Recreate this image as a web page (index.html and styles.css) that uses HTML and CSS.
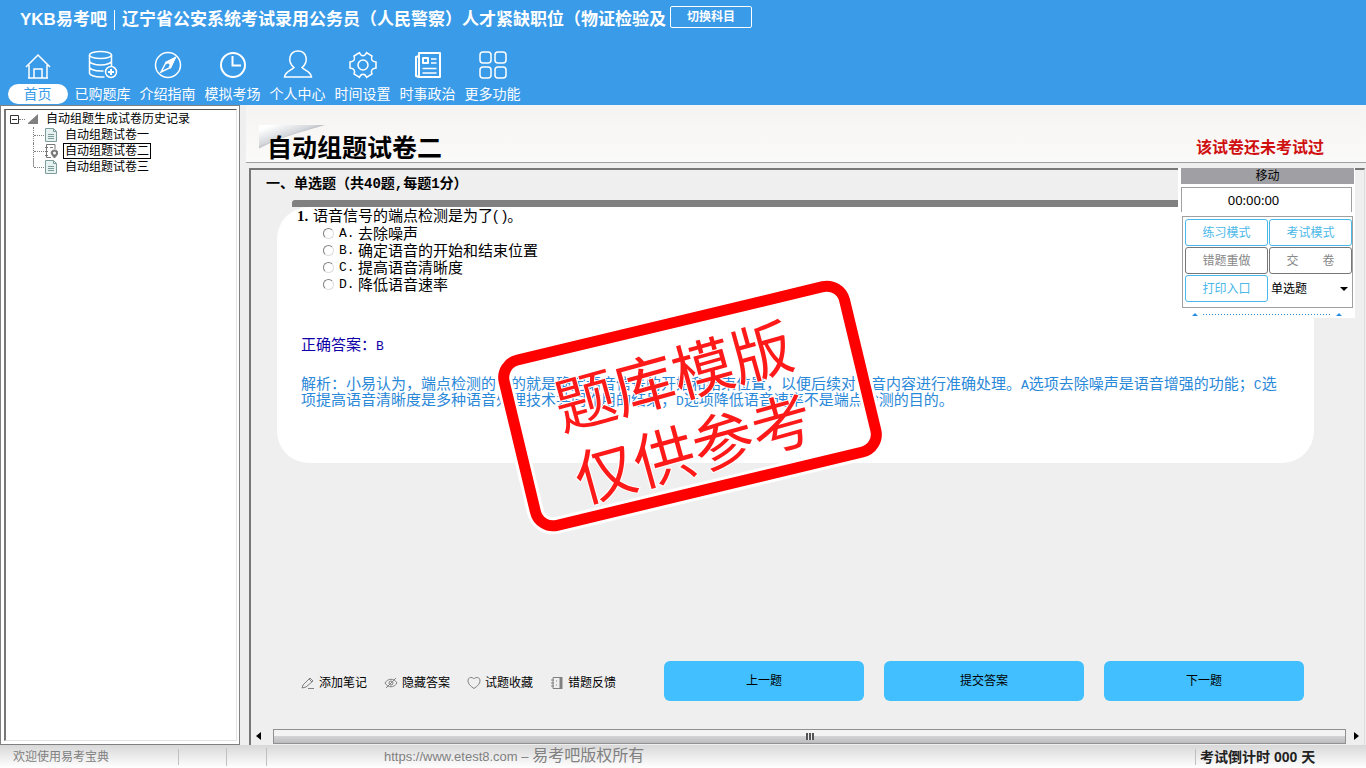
FILE: index.html
```html
<!DOCTYPE html>
<html lang="zh-CN">
<head>
  <meta charset="UTF-8">
  <meta name="viewport" content="width=device-width, initial-scale=1.0">
  <title>易考吧 - 自动组题试卷二</title>
  <link rel="stylesheet" href="styles.css">
</head>
<body>
  <!-- 顶部 -->
  <header class="header">
    <div class="title-bar">
      <span class="logo">YKB易考吧</span>
      <h1 class="subject">辽宁省公安系统考试录用公务员（人民警察）人才紧缺职位（物证检验及</h1>
      <button type="button" class="switch-btn">切换科目</button>
    </div>
    <nav class="nav">
      <a href="#" class="active">
        <svg viewBox="0 0 30 30"><path d="M3 17 15 5 27 17M6 15v13h5v-9h8v9h5V15M5 28h20"/></svg>
        <span>首页</span>
      </a>
      <a href="#">
        <svg viewBox="0 0 30 30"><ellipse cx="12.500" cy="5" rx="11" ry="3.500"/><path d="M1.500 5v18c0 2 5 4 11 4h4M23.500 5v11M1.500 11c0 2 5 4 11 4s11-2 11-4M1.500 17c0 2 5 4 11 4h3"/><circle cx="23" cy="22" r="5.500"/><path d="M23 19v6M20 22h6" stroke-width="2"/></svg>
        <span>已购题库</span>
      </a>
      <a href="#">
        <svg viewBox="0 0 30 30"><circle cx="15" cy="15" r="12.500"/><path d="m22 8-4.500 9.500L8 22l5-9.500z"/><path d="m22 8-9 4.500 4.500 5z" fill="#fff"/><circle cx="15" cy="15" r="1.500" fill="#3a9be8" stroke="none"/></svg>
        <span>介绍指南</span>
      </a>
      <a href="#">
        <svg viewBox="0 0 30 30"><circle cx="15" cy="15" r="12" stroke-width="2"/><path d="M14.500 6v9.500H23" stroke-width="2"/></svg>
        <span>模拟考场</span>
      </a>
      <a href="#">
        <svg viewBox="0 0 30 30"><path d="M11 17.500C4 12 6 1 15 1s11 11 4 16.500c3 3 9 4 9.500 9.500h-27C2 21.500 8 20.500 11 17.500z"/></svg>
        <span>个人中心</span>
      </a>
      <a href="#">
        <svg viewBox="0 0 30 30"><circle cx="15" cy="15" r="5"/><path d="m10 3.500 1.500-.8c1 2.500 2 3 3.500 3s2.500-.5 3.500-3l5.500 3.300c-1.500 3.500 0 5.500 4 6v6c-4 .5-5.500 2.500-4 6l-5.500 3.300c-1-2.500-2-3-3.500-3s-2.500.5-3.500 3L6 24c1.500-3.500 0-5.500-4-6v-6c4-.5 5.500-2.500 4-6z"/></svg>
        <span>时间设置</span>
      </a>
      <a href="#">
        <svg viewBox="0 0 30 30"><path d="M6 3h21v24H6zM6 6 3 7v19l3 1M10 8h5v5h-5z" stroke-width="2" stroke-linejoin="round"/><path d="M18 9h5.500M18 13h5.500M9.500 18.500h14M9.500 23h14"/></svg>
        <span>时事政治</span>
      </a>
      <a href="#">
        <svg viewBox="0 0 30 30"><rect x="2" y="2" width="11" height="11" rx="3"/><rect x="17" y="2" width="11" height="11" rx="3"/><rect x="2" y="17" width="11" height="11" rx="3"/><rect x="17" y="17" width="11" height="11" rx="3"/></svg>
        <span>更多功能</span>
      </a>
    </nav>
  </header>

  <main class="main">
    <!-- 左侧试卷列表 -->
    <aside class="sidebar">
      <div class="tree">
        <div class="tree-root">
          <svg class="toggle" viewBox="0 0 9 9"><path d="M.5.5h8v8h-8zM2 4.500h5"/></svg>
          <span class="dots"></span>
          <svg class="root-icon" viewBox="0 0 11 11"><path d="M10 0v10H0V9z"/></svg>
          <span>自动组题生成试卷历史记录</span>
        </div>
        <ul class="tree-list">
          <li>
            <svg viewBox="0 0 14 16"><path class="sheet" d="M1.500 1.500h8l3 3v10h-11z"/><path d="M9.500 1.500v3h3M4 7.500h6M4 9.500h6M4 11.500h6"/></svg>
            <a href="#">自动组题试卷一</a>
          </li>
          <li class="selected">
            <svg viewBox="0 0 14 16"><path d="M11 6V1.500H2.500v13H7M1 4.500h3M1 8.500h3M1 12.500h3M6 4.500h3"/><path class="pin" d="M10.500 15C4.500 9 8 7 10.500 7s6 2 0 8z"/><circle class="hole" cx="10.500" cy="10" r="1.500"/></svg>
            <a href="#">自动组题试卷二</a>
          </li>
          <li>
            <svg viewBox="0 0 14 16"><path class="sheet" d="M1.500 1.500h8l3 3v10h-11z"/><path d="M9.500 1.500v3h3M4 7.500h6M4 9.500h6M4 11.500h6"/></svg>
            <a href="#">自动组题试卷三</a>
          </li>
        </ul>
      </div>
    </aside>

    <!-- 右侧答题区 -->
    <section class="content">
      <div class="paper-header">
        <h2>自动组题试卷二</h2>
        <strong>该试卷还未考试过</strong>
      </div>

      <div class="paper">
        <h3 class="section-title">一、单选题（共40题,每题1分）</h3>
        <div class="question-bar"></div>
        <form class="question">
          <p class="question-text"><b>1.</b>语音信号的端点检测是为了( )。</p>
          <label class="option"><input type="radio" name="q1" value="A"><span class="letter">A.</span>去除噪声</label>
          <label class="option"><input type="radio" name="q1" value="B"><span class="letter">B.</span>确定语音的开始和结束位置</label>
          <label class="option"><input type="radio" name="q1" value="C"><span class="letter">C.</span>提高语音清晰度</label>
          <label class="option"><input type="radio" name="q1" value="D"><span class="letter">D.</span>降低语音速率</label>
          <p class="answer">正确答案：<span class="half">B</span></p>
          <p class="analysis">解析：小易认为，端点检测的目的就是确定语音信号的开始和结束位置，以便后续对语音内容进行准确处理。<span class="half">A</span>选项去除噪声是语音增强的功能；<span class="half">C</span>选项提高语音清晰度是多种语音处理技术共同作用的结果；<span class="half">D</span>选项降低语音速率不是端点检测的目的。</p>
        </form>

        <!-- 底部操作 -->
        <div class="toolbar">
          <div class="tools">
            <a href="#"><svg viewBox="0 0 14 14"><path d="m2 9 7-7 3 3-7 6-4 1zM8 3l3 3M7 12.500h6"/></svg>添加笔记</a>
            <a href="#"><svg viewBox="0 0 14 14"><path d="M1 7c3-5 9-5 12 0-3 5-9 5-12 0zM2 12 12 2"/><circle cx="7" cy="7" r="2"/></svg>隐藏答案</a>
            <a href="#"><svg viewBox="0 0 14 14"><path d="M7 12.500C-2 7 1 1 4 1.500c2 0 2 1 3 1s1-1 3-1c3-.5 6 5.500-3 11z"/></svg>试题收藏</a>
            <a href="#"><svg viewBox="0 0 14 14"><path d="M3 1.500h8v11H3zM1 4h3M1 7h3M1 10h3M6 5h1M6 9h1"/><path d="M11 1v12" stroke-width="3"/></svg>错题反馈</a>
          </div>
          <div class="actions">
            <button type="button">上一题</button>
            <button type="button">提交答案</button>
            <button type="button">下一题</button>
          </div>
        </div>

        <div class="scrollbar">
          <svg viewBox="0 0 5 8"><path d="M5 0v8L0 4z"/></svg>
          <div class="thumb"><i></i></div>
          <svg viewBox="0 0 5 8"><path d="M0 0v8l5-4z"/></svg>
        </div>

        <!-- 浮动面板 -->
        <div class="panel">
          <div class="panel-move">移动</div>
          <div class="panel-time">00:00:00</div>
          <div class="panel-grid">
            <button type="button">练习模式</button>
            <button type="button">考试模式</button>
            <button type="button" class="gray">错题重做</button>
            <button type="button" class="gray">交　　卷</button>
            <button type="button">打印入口</button>
            <div class="type-select">
              <select aria-label="题型"><option>单选题</option></select>
              <svg viewBox="0 0 8 4"><path d="M0 0h8L4 4z"/></svg>
            </div>
          </div>
          <div class="panel-fold"><i></i></div>
        </div>

        <!-- 印章 -->
        <svg class="stamp" viewBox="0 0 400 260">
          <g transform="rotate(-13.500 200 130)">
            <rect class="halo" x="25" y="45" width="350" height="170" rx="18"/>
            <rect class="edge" x="25" y="45" width="350" height="170" rx="18"/>
          </g>
          <g transform="rotate(-15.500 193 135)">
            <text x="193" y="122">题库模版</text>
            <text x="193" y="197">仅供参考</text>
          </g>
        </svg>
      </div>
    </section>
  </main>

  <!-- 状态栏 -->
  <footer class="status">
    <span class="welcome">欢迎使用易考宝典</span>
    <span class="cell"></span>
    <span class="cell small"></span>
    <span class="copyright"><a href="#">https://www.etest8.com</a> – <span>易考吧版权所有</span></span>
    <strong class="countdown">考试倒计时 000 天</strong>
  </footer>
</body>
</html>
```
FILE: styles.css
```css
* {
  margin: 0;
  padding: 0;
  box-sizing: border-box;
}
body {
  font-family: "Liberation Sans", "Noto Sans CJK SC", sans-serif;
  font-size: 12px;
  line-height: 16px;
  color: #000;
  background: #efefef;
  display: flex;
  flex-direction: column;
  height: 100vh;
  overflow: hidden;
}
a {
  color: inherit;
  text-decoration: none;
}
button,
select {
  font: inherit;
  cursor: pointer;
}
/* 顶部 */
.header {
  background: #3a9be8;
  color: #fff;
  height: 105px;
  flex: none;
}
.title-bar {
  display: flex;
  align-items: center;
  height: 40px;
  padding-left: 20px;
  white-space: nowrap;
}
.logo {
  font-size: 17px;
  font-weight: bold;
  line-height: 20px;
  width: 95px;
  border-right: 1px solid #fff;
}
.subject {
  font-size: 17px;
  line-height: 20px;
  margin: 0 4px 0 7px;
}
.switch-btn {
  width: 82px;
  height: 22px;
  margin-bottom: 6px;
  border: 1px solid #fff;
  border-radius: 2px;
  background: none;
  color: #fff;
  font-weight: bold;
}
.nav {
  display: flex;
  padding: 10px 0 0 5px;
}
.nav a {
  width: 65px;
  display: flex;
  flex-direction: column;
  align-items: center;
  gap: 4px;
  font-size: 14px;
  line-height: 20px;
  white-space: nowrap;
}
.nav svg {
  width: 30px;
  height: 30px;
  fill: none;
  stroke: #fff;
  stroke-width: 1.5;
}
.nav .active span {
  width: 60px;
  text-align: center;
  border-radius: 10px;
  background: #fff;
  color: #3a9be8;
}
.main {
  flex: 1;
  display: flex;
  gap: 6px;
  min-height: 0;
}
/* 左侧试卷列表 */
.sidebar {
  width: 240px;
  flex: none;
  padding: 3px 2px 3px 3px;
  background: #fff;
  border: 1px solid #808080;
}
.tree {
  height: 100%;
  padding: 1px 4px;
  border: 1px solid #e3e3e3;
  border-top-color: #555;
  border-left: 2px solid #777;
}
.tree-root {
  display: flex;
  align-items: center;
  height: 16px;
}
.toggle {
  width: 9px;
  height: 9px;
  fill: #fff;
  stroke: #333;
}
.dots {
  width: 6px;
  border-top: 1px dotted #808080;
}
.root-icon {
  width: 11px;
  height: 11px;
  margin: 0 7px 0 3px;
  fill: #808080;
}
.tree-list {
  list-style: none;
  margin-left: 23px;
}
.tree-list li {
  display: flex;
  align-items: center;
  height: 16px;
  border-left: 1px dotted #808080;
}
.tree-list li:last-child {
  border-image: linear-gradient(#999 50%, transparent 50%) 1;
}
.tree-list li::before {
  content: '';
  width: 10px;
  border-top: 1px dotted #808080;
}
.tree-list svg {
  width: 14px;
  height: 16px;
  fill: none;
  stroke: #7f9c9c;
}
.tree-list .sheet {
  fill: #e6f2f2;
}
.tree-list .selected svg {
  stroke: #777;
}
.tree-list .pin {
  fill: #777;
}
.tree-list .hole {
  fill: #fff;
  stroke: none;
}
.tree-list a {
  height: 16px;
  line-height: 14px;
  margin-left: 5px;
  padding: 0 1px;
  border: 1px solid transparent;
}
.tree-list .selected a {
  border-color: #000;
}
/* 右侧答题区 */
.content {
  flex: 1;
  min-width: 0;
  display: flex;
  flex-direction: column;
}
.paper-header {
  height: 58px;
  flex: none;
  display: flex;
  justify-content: space-between;
  align-items: flex-end;
  padding: 0 42px 0 13px;
  background: linear-gradient(#f6f4f3, #fafaf8);
  border-bottom: 1px solid #a0a0a0;
}
.paper-header h2 {
  position: relative;
  font-size: 25px;
  line-height: 28px;
  padding: 0 8px;
  z-index: 0;
}
/* 标题左上角卷页 */
.paper-header h2::before {
  content: '';
  position: absolute;
  left: 0;
  top: -9px;
  width: 66px;
  height: 26px;
  z-index: -1;
  background: linear-gradient(160deg, #fff 10%, #d5d8dc 40%, #8e949c 60%, #e8e8e8);
  clip-path: polygon(0 0, 100% 0, 60% 30%, 25% 60%, 0 90%);
}
.paper-header strong {
  font-size: 16px;
  line-height: 28px;
  color: #d01010;
}
.paper {
  position: relative;
  flex: 1;
  display: flex;
  flex-direction: column;
  margin: 5px 1px 0 3px;
  border: 2px solid #777;
  border-right: 1px solid #ddd;
  border-bottom: 0;
}
.section-title {
  font-family: "Liberation Mono", "Noto Sans CJK SC", monospace;
  font-size: 14px;
  line-height: 20px;
  padding: 4px 0 0 15px;
}
.question-bar {
  height: 7px;
  margin: 6px 50px 0 41px;
  background: #808080;
  border-radius: 3px 0 0 0;
}
.question {
  min-height: 256px;
  margin: 0 50px 0 26px;
  padding: 0 30px 0 24px;
  background: #fff;
  border-radius: 32px;
  font-size: 15px;
}
.question-text {
  margin-left: -4px;
  line-height: 17px;
}
.question-text b {
  display: inline-block;
  width: 16px;
  font-family: "Liberation Serif", serif;
}
.option {
  display: flex;
  align-items: center;
  height: 17px;
  margin-left: 22px;
}
.option input {
  appearance: none;
  width: 11px;
  height: 11px;
  border: 1px solid #808080;
  border-right-color: #ddd;
  border-bottom-color: #ddd;
  border-radius: 50%;
}
.option input:checked {
  background: radial-gradient(#000 35%, #fff 45%);
}
.letter {
  width: 19px;
  margin-left: 5px;
  font-family: "Liberation Mono", monospace;
  font-size: 13px;
}
.half {
  font-family: "Liberation Mono", monospace;
  font-size: 13px;
  line-height: 1px;
}
.answer {
  margin-top: 44px;
  color: #1000a8;
}
.analysis {
  margin-top: 23px;
  color: #2a88d8;
}
.toolbar {
  display: flex;
  align-items: center;
  gap: 48px;
  margin: auto 60px 27px 50px;
}
.tools {
  display: flex;
  flex: none;
  gap: 17px;
  padding-top: 3px;
}
.tools a {
  display: flex;
  align-items: center;
  gap: 4px;
}
.tools svg {
  width: 14px;
  height: 14px;
  fill: none;
  stroke: #808080;
}
.actions {
  flex: 1;
  display: flex;
  gap: 20px;
}
.actions button {
  flex: 1;
  height: 40px;
  border: none;
  border-radius: 6px;
  background: #42bfff;
}
.scrollbar {
  display: flex;
  align-items: center;
  gap: 8px;
  height: 16px;
  margin-bottom: 1px;
  padding: 0 5px;
}
.scrollbar svg {
  width: 5px;
  height: 8px;
  flex: none;
}
.thumb {
  flex: 1;
  height: 15px;
  margin-left: 4px;
  display: flex;
  justify-content: center;
  align-items: center;
  border: 1px solid #909090;
  background: linear-gradient(#f3f3f3 45%, #d2d2d4 50%, #bcbcbe);
}
.thumb i {
  width: 8px;
  height: 7px;
  background: repeating-linear-gradient(90deg, #555 0 2px, #eee 2px 3px);
}
/* 浮动面板 */
.panel {
  position: absolute;
  top: -2px;
  right: 9px;
  width: 177px;
  padding: 0 1px 0 3px;
  background: #fff;
}
.panel-move {
  height: 16px;
  background: #a0a0a4;
  text-align: center;
}
.panel-time {
  height: 25px;
  margin: 3px 2px 4px 0;
  padding-right: 26px;
  border: 1px solid #a0a0a0;
  border-bottom: 0;
  text-align: center;
  font: 13px/25px "Noto Sans", sans-serif;
}
.panel-grid {
  display: grid;
  grid-template-columns: 1fr 1fr;
  gap: 1px;
  margin: 0 1px;
  padding: 2px 0 5px 2px;
  border: 1px solid #a0a0a0;
}
.panel-grid button {
  height: 27px;
  border: 1px solid #4ab8e8;
  border-radius: 3px;
  background: #fff;
  color: #4ab8e8;
}
.panel-grid .gray {
  border-color: #777;
  color: #888;
}
.type-select {
  position: relative;
  display: flex;
}
.type-select select {
  appearance: none;
  width: 100%;
  padding-left: 2px;
  border: none;
  background: #fff;
}
.type-select svg {
  position: absolute;
  right: 4px;
  top: 12px;
  width: 8px;
  height: 4px;
  pointer-events: none;
}
.panel-fold {
  display: flex;
  align-items: center;
  gap: 5px;
  height: 10px;
  padding: 2px 12px 0 11px;
}
.panel-fold::before,
.panel-fold::after {
  content: '';
  border: 3px solid transparent;
  border-top: 0;
  border-bottom-color: #2a8de0;
}
.panel-fold i {
  flex: 1;
  height: 1px;
  background: repeating-linear-gradient(90deg, #2a8de0 0 1px, #fff 1px 3px);
}
/* 印章 */
.stamp {
  position: absolute;
  left: 239px;
  top: 106px;
  width: 400px;
  height: 260px;
  pointer-events: none;
}
.stamp rect {
  fill: none;
}
.stamp .halo {
  stroke: #fff;
  stroke-width: 17px;
}
.stamp .edge {
  stroke: #f00;
  stroke-width: 11px;
}
.stamp text {
  font-size: 61px;
  text-anchor: middle;
  fill: #ff1a1a;
  stroke: #fff;
  stroke-width: 2px;
  paint-order: stroke;
}
/* 状态栏 */
.status {
  display: flex;
  align-items: center;
  height: 23px;
  flex: none;
  color: #808080;
  background: linear-gradient(#d8d8d8, #fff);
  white-space: nowrap;
}
.welcome {
  width: 179px;
  padding-left: 13px;
  border-right: 1px solid #c0c0c0;
}
.cell {
  width: 48px;
  height: 18px;
  border-right: 1px solid #c0c0c0;
}
.cell.small {
  width: 40px;
}
.copyright {
  flex: 1;
  padding-left: 117px;
  font-size: 13px;
}
.copyright span {
  font-size: 16px;
}
.countdown {
  width: 171px;
  padding-left: 4px;
  border-left: 1px solid #c0c0c0;
  font-size: 14px;
  color: #222;
}
```
